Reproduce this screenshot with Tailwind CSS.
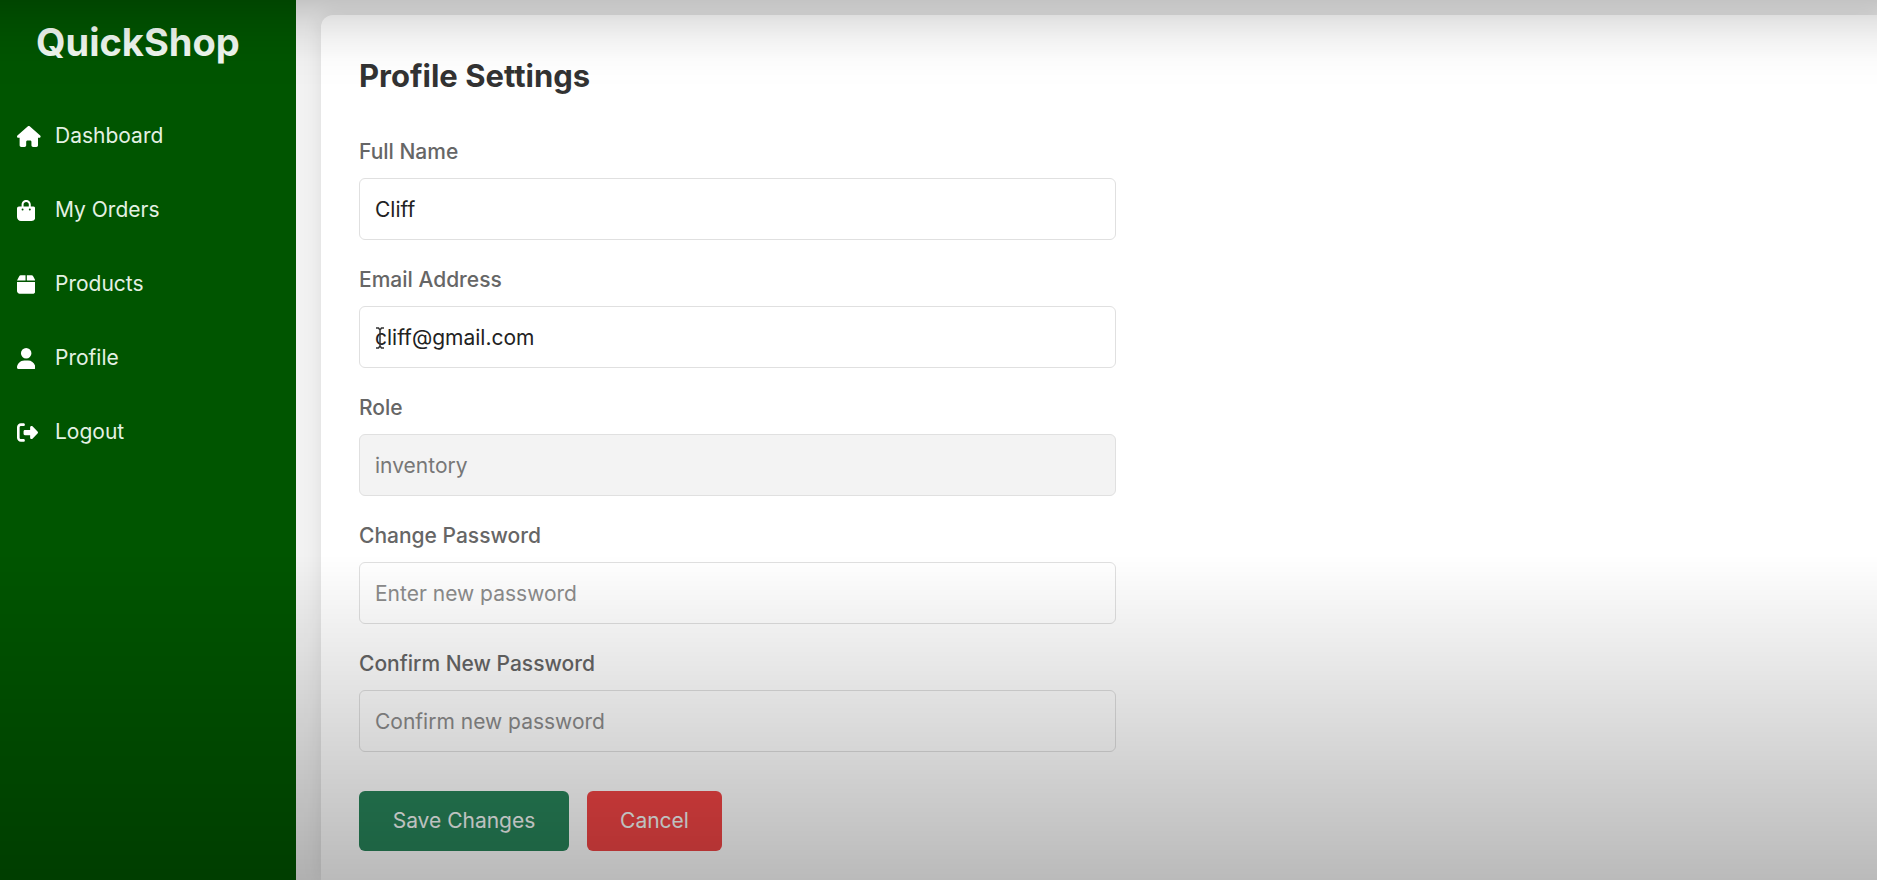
<!DOCTYPE html>
<html lang="en">
<head>
<meta charset="utf-8">
<title>QuickShop - Profile Settings</title>
<script src="https://cdn.jsdelivr.net/npm/@tailwindcss/browser@4"></script>
</head>
<body class="flex h-screen overflow-hidden bg-[#f2f2f2] font-['Inter',sans-serif] text-[21px]">
  <aside class="w-[296px] shrink-0 bg-[#005500] text-[#e4f1e4]">
    <div class="pt-[18px] pl-9 text-[38px] leading-12 font-bold text-[#f0f8f0]">QuickShop</div>
    <nav class="mt-[43px] flex flex-col gap-5">
      <a href="#" class="flex h-[54px] items-center pl-[17px]"><span class="w-[38px]"><svg class="h-[21px] w-auto fill-white" viewBox="0 0 576 512" aria-hidden="true"><path d="M575.8 255.5c0 18-15 32.1-32 32.1h-32l.7 160.2c0 2.7-.2 5.4-.5 8.1V472c0 22.1-17.9 40-40 40H456c-1.1 0-2.2 0-3.3-.1c-1.4 .1-2.8 .1-4.2 .1H416 392c-22.1 0-40-17.9-40-40V448 384c0-17.7-14.3-32-32-32H256c-17.7 0-32 14.3-32 32v64 24c0 22.1-17.9 40-40 40H160 128.1c-1.5 0-3-.1-4.5-.2c-1.2 .1-2.4 .2-3.6 .2H104c-22.1 0-40-17.9-40-40V360c0-.9 0-1.9 .1-2.8V287.6H32c-18 0-32-14-32-32.1c0-9 3-17 10-24L266.4 8c7-7 15-8 22-8s15 2 21 7L564.8 231.5c8 7 12 15 11 24z"/></svg></span>Dashboard</a>
      <a href="#" class="flex h-[54px] items-center pl-[17px]"><span class="w-[38px]"><svg class="h-[21px] w-auto fill-white" viewBox="0 0 448 512" aria-hidden="true"><path d="M160 112c0-35.3 28.7-64 64-64s64 28.7 64 64v48H160V112zm-48 48H48c-26.5 0-48 21.5-48 48V416c0 53 43 96 96 96H352c53 0 96-43 96-96V208c0-26.5-21.5-48-48-48H336V112C336 50.1 285.9 0 224 0S112 50.1 112 112v48zm24 48a24 24 0 1 1 0 48 24 24 0 1 1 0-48zm152 24a24 24 0 1 1 48 0 24 24 0 1 1 -48 0z"/></svg></span>My Orders</a>
      <a href="#" class="flex h-[54px] items-center pl-[17px]"><span class="w-[38px]"><svg class="h-[21px] w-auto fill-white" viewBox="0 0 448 512" aria-hidden="true"><path d="M50.7 58.5L0 160H208V32H93.7C75.5 32 58.9 42.3 50.7 58.5zM240 160H448L397.3 58.5C389.1 42.3 372.5 32 354.3 32H240V160zm208 32H0V416c0 35.3 28.7 64 64 64H384c35.3 0 64-28.7 64-64V192z"/></svg></span>Products</a>
      <a href="#" class="flex h-[54px] items-center pl-[17px]"><span class="w-[38px]"><svg class="h-[21px] w-auto fill-white" viewBox="0 0 448 512" aria-hidden="true"><path d="M224 256A128 128 0 1 0 224 0a128 128 0 1 0 0 256zm-45.7 48C79.8 304 0 383.8 0 482.3C0 498.7 13.3 512 29.7 512H418.3c16.4 0 29.7-13.3 29.7-29.7C448 383.8 368.2 304 269.7 304H178.3z"/></svg></span>Profile</a>
      <a href="#" class="flex h-[54px] items-center pl-[17px]"><span class="w-[38px]"><svg class="h-[21px] w-auto fill-white" viewBox="0 0 512 512" aria-hidden="true"><path d="M377.9 105.9L500.7 228.7c7.2 7.2 11.3 17.1 11.3 27.3s-4.1 20.1-11.3 27.3L377.9 406.1c-6.4 6.4-15 9.9-24 9.9c-18.7 0-33.9-15.2-33.9-33.9l0-62.1-128 0c-17.7 0-32-14.3-32-32l0-64c0-17.7 14.3-32 32-32l128 0 0-62.1c0-18.7 15.2-33.9 33.9-33.9c9 0 17.6 3.6 24 9.9zM160 96L96 96c-17.7 0-32 14.3-32 32l0 256c0 17.7 14.3 32 32 32l64 0c17.7 0 32 14.3 32 32s-14.3 32-32 32l-64 0c-53 0-96-43-96-96L0 128C0 75 43 32 96 32l64 0c17.7 0 32 14.3 32 32s-14.3 32-32 32z"/></svg></span>Logout</a>
    </nav>
  </aside>
  <main class="flex grow pt-[15px] pl-[25px]">
    <section class="grow rounded-tl-xl bg-white px-[38px] pt-[41px] shadow-[0_0_20px_rgba(0,0,0,0.09)]">
      <h1 class="mb-[41px] text-[31px] leading-10 font-bold text-[#333]">Profile Settings</h1>
      <form class="max-w-[757px]">
        <div class="flex flex-col gap-[25px]">
          <div class="flex flex-col gap-[11px]">
            <label for="name" class="leading-[30px] font-medium text-[#666]">Full Name</label>
            <input id="name" type="text" value="Cliff" class="h-[62px] rounded-md border border-[#e0e0e0] bg-white px-[15px] text-[#222]">
          </div>
          <div class="flex flex-col gap-[11px]">
            <label for="email" class="leading-[30px] font-medium text-[#666]">Email Address</label>
            <div class="relative flex">
              <input id="email" type="email" value="cliff@gmail.com" class="h-[62px] w-full rounded-md border border-[#e0e0e0] bg-white px-[15px] text-[#222]">
              <svg class="pointer-events-none absolute top-[21px] left-4 h-[22px] w-2.5" viewBox="0 0 10 22" fill="none" stroke="#333" stroke-width="1.5" aria-hidden="true"><path d="M1 1h2.500L5 3l1.500-2H9M5 3v16M1 21h2.500L5 19l1.500 2H9"/></svg>
            </div>
          </div>
          <div class="flex flex-col gap-[11px]">
            <label for="role" class="leading-[30px] font-medium text-[#666]">Role</label>
            <input id="role" type="text" value="inventory" readonly class="h-[62px] rounded-md border border-[#e0e0e0] bg-[#f3f3f3] px-[15px] text-[#777]">
          </div>
          <div class="flex flex-col gap-[11px]">
            <label for="password" class="leading-[30px] font-medium text-[#666]">Change Password</label>
            <input id="password" type="password" placeholder="Enter new password" class="h-[62px] rounded-md border border-[#e0e0e0] bg-white px-[15px] placeholder:text-[#8c8c8c]">
          </div>
          <div class="flex flex-col gap-[11px]">
            <label for="confirm" class="leading-[30px] font-medium text-[#666]">Confirm New Password</label>
            <input id="confirm" type="password" placeholder="Confirm new password" class="h-[62px] rounded-md border border-[#e0e0e0] bg-white px-[15px] placeholder:text-[#8c8c8c]">
          </div>
        </div>
        <div class="mt-[39px] flex gap-[18px] text-[#f4f8f6]">
          <button type="submit" class="h-[60px] w-[210px] rounded-md bg-[#28845a]">Save Changes</button>
          <button type="button" class="h-[60px] w-[135px] rounded-md bg-[#f04545]">Cancel</button>
        </div>
      </form>
    </section>
  </main>
  <!-- Shading along the top and bottom edges of the window -->
  <div class="pointer-events-none fixed inset-x-0 top-0 h-[88px] bg-[linear-gradient(to_bottom,rgba(0,0,0,0.19),rgba(0,0,0,0.105)_23%,rgba(0,0,0,0.05)_45%,rgba(0,0,0,0.012)_70%,transparent)]"></div>
  <div class="pointer-events-none fixed inset-x-0 bottom-0 h-[325px] bg-linear-to-b from-transparent to-black/27"></div>
</body>
</html>
